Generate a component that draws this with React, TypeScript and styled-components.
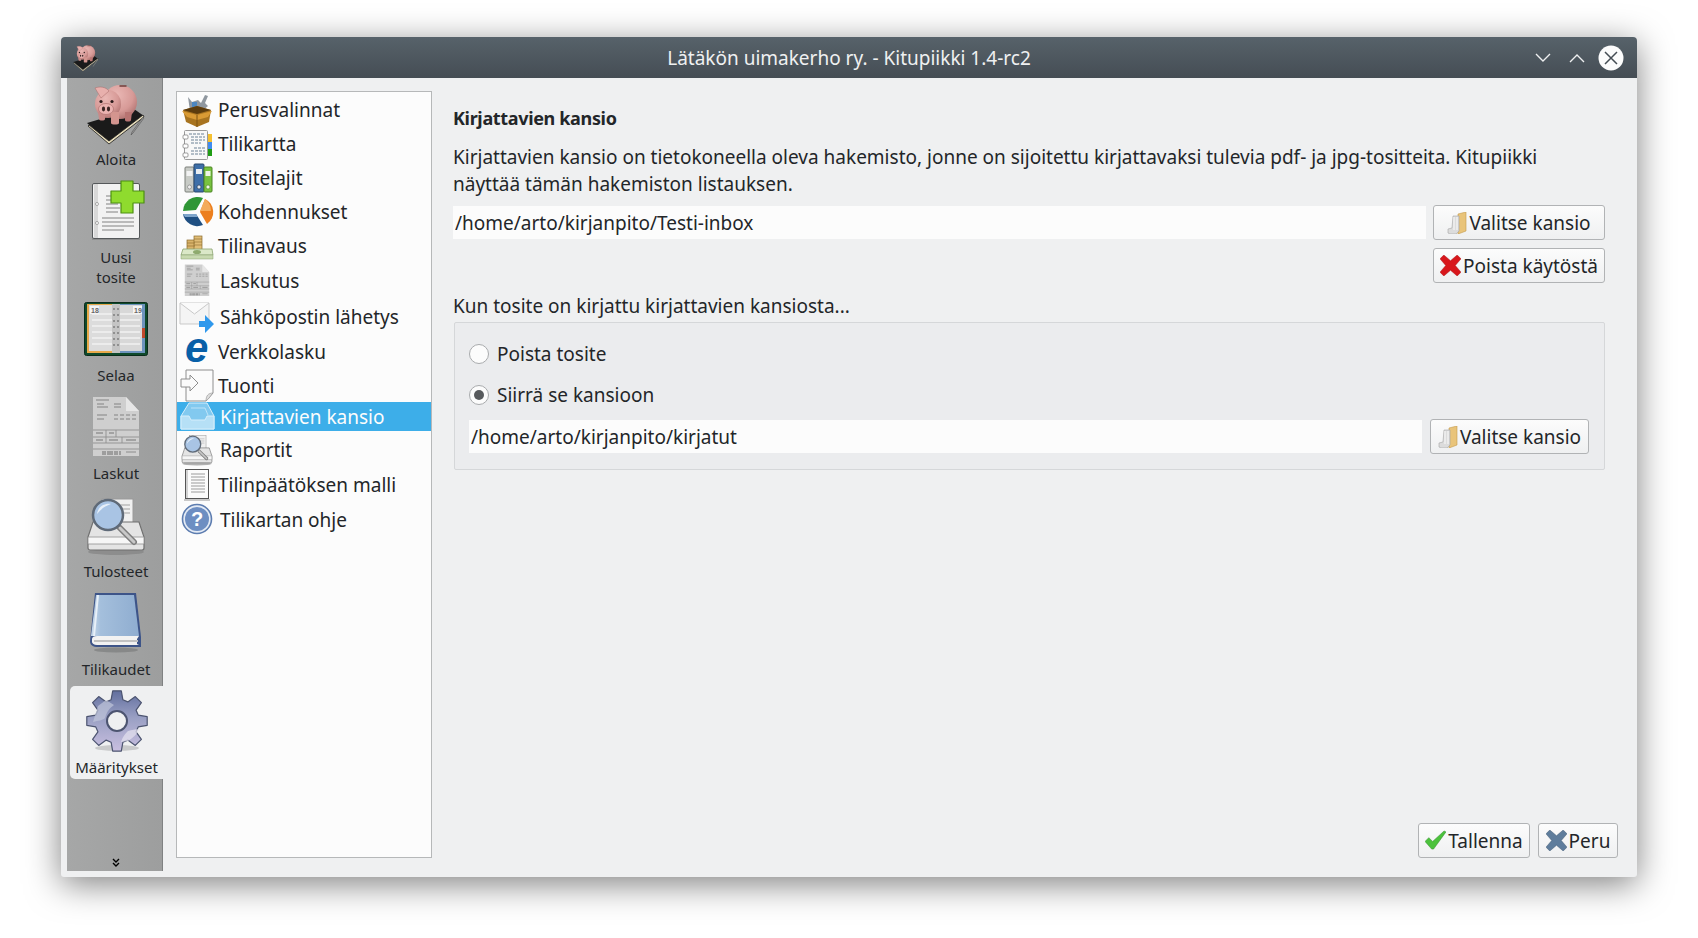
import React from "react";
import styled, { createGlobalStyle } from "styled-components";

const GlobalStyle = createGlobalStyle`
  html, body {
    margin: 0;
    height: 938px;
    overflow: hidden;
    background: #fff;
    font-family: "Noto Sans", "Open Sans", sans-serif;
    color: #232629;
  }
`;

const Screen = styled.div`
  padding: 37px 61px 61px;
  height: 938px;
  box-sizing: border-box;
`;

const Window = styled.div`
  height: 840px;
  display: flex;
  flex-direction: column;
  background: #eff0f1;
  border-radius: 4px 4px 3px 3px;
  box-shadow: 0 7px 34px rgba(0, 0, 0, 0.5);
`;

const TitleBar = styled.header`
  height: 41px;
  flex: none;
  display: grid;
  grid-template-columns: 1fr auto 1fr;
  align-items: center;
  background: linear-gradient(#57626a, #454d54);
  border-radius: 4px 4px 0 0;
  color: #eff0f1;
  font-size: 19px;
`;

const TitleIcon = styled.div`
  display: flex;
  padding-left: 11px;
`;

const TitleButtons = styled.div`
  display: flex;
  align-items: center;
  justify-content: flex-end;
  gap: 14px;
  padding-right: 13px;

  & > svg:last-child {
    margin-left: -3px;
  }
`;

const Body = styled.div`
  flex: 1;
  display: flex;
  min-height: 0;
`;

const Sidebar = styled.nav`
  width: 96px;
  margin: 0 0 6px 6px;
  position: relative;
  display: flex;
  flex-direction: column;
  gap: 5px;
  box-sizing: border-box;
  background: linear-gradient(90deg, #a6a7a7, #9d9e9e);
  border-right: 1px solid #7f8182;
`;

const SideItem = styled.div<{ $active?: boolean; $tall?: boolean }>`
  height: ${(p) => (p.$tall ? 113 : 93)}px;
  margin-left: 3px;
  margin-right: ${(p) => (p.$active ? -1 : 0)}px;
  padding-top: 4px;
  box-sizing: border-box;
  display: flex;
  flex-direction: column;
  align-items: center;
  border-radius: 5px 0 0 5px;
  background: ${(p) => (p.$active ? "#eff0f1" : "transparent")};
  font-size: 15px;
  line-height: 20px;
  text-align: center;
`;

const SideLabel = styled.div`
  margin-top: 3px;
`;

const MoreArrow = styled.div`
  position: absolute;
  left: 45px;
  bottom: 3px;
  display: flex;
`;

const ListPanel = styled.div`
  width: 256px;
  margin: 13px 0 19px 13px;
  padding-top: 1px;
  background: #fcfcfc;
  border: 1px solid #b6b8b9;
  box-sizing: border-box;
  flex: none;
`;

const ListRow = styled.div<{ $h: number; $selected?: boolean; $text: number }>`
  height: ${(p) => p.$h}px;
  display: flex;
  align-items: center;
  font-size: 19px;
  background: ${(p) => (p.$selected ? "#3daee9" : "transparent")};
  color: ${(p) => (p.$selected ? "#fcfcfc" : "#232629")};

  & > svg {
    margin-left: 3px;
    margin-right: ${(p) => p.$text - 3 - 34}px;
    flex: none;
  }
`;

const Main = styled.main`
  flex: 1;
  display: flex;
  flex-direction: column;
  min-width: 0;
`;

const Page = styled.section`
  flex: 1;
  padding: 27px 32px 0 21px;
  font-size: 19px;
  line-height: 27px;
`;

const Heading = styled.h2`
  margin: 0 0 13px;
  font-size: 18px;
  line-height: 26px;
  font-weight: 700;
  letter-spacing: -0.34px;
`;

const Paragraph = styled.p`
  margin: 0 0 7px;
`;

const Row = styled.div<{ $gap: number }>`
  display: flex;
  gap: ${(p) => p.$gap}px;
`;

const PathInput = styled.input`
  flex: 1;
  min-width: 0;
  margin: 1px 0;
  padding: 2px 2px 0;
  border: 0;
  outline: 0;
  background: #fcfcfc;
  font: inherit;
  color: #232629;
`;

const Button = styled.button<{ $w: number }>`
  width: ${(p) => p.$w}px;
  height: 35px;
  flex: none;
  display: flex;
  align-items: center;
  justify-content: center;
  gap: 2px;
  padding: 2px 0 0;
  border: 1px solid #b1b3b5;
  border-radius: 3px;
  background: linear-gradient(#fcfcfc, #eff0f1);
  font: inherit;
  font-size: 19px;
  color: #232629;

  & > svg {
    margin-top: -2px;
  }
`;

const FooterButton = styled(Button)`
  padding-top: 0;

  & > svg {
    margin-top: 0;
  }
`;

const RightAligned = styled.div`
  display: flex;
  justify-content: flex-end;
  margin-top: 8px;
`;

const GroupLabel = styled.div`
  margin: 10px 0 2px;
  height: 27px;
`;

const Group = styled.div`
  padding: 10px 15px 15px 14px;
  background: #ebecee;
  border: 1px solid #d5d7d9;
  border-radius: 2px;
  margin-left: 1px;
`;

const RadioRow = styled.label`
  height: 41px;
  box-sizing: border-box;
  padding-top: 2px;
  display: flex;
  align-items: center;
  gap: 8px;
`;

const Radio = styled.span<{ $checked?: boolean }>`
  width: 20px;
  height: 20px;
  margin-top: -2px;
  box-sizing: border-box;
  border: 1px solid #a9abad;
  border-radius: 50%;
  background: #fcfcfc;
  display: flex;
  align-items: center;
  justify-content: center;

  &::after {
    content: "";
    display: ${(p) => (p.$checked ? "block" : "none")};
    width: 10px;
    height: 10px;
    border-radius: 50%;
    background: #575a5d;
  }
`;

const GroupPathRow = styled(Row)`
  margin-top: 4px;
`;

const Footer = styled.footer`
  display: flex;
  justify-content: flex-end;
  gap: 8px;
  padding: 0 19px 19px 0;
`;

type IconProps = { size?: number };

const PigIcon = ({ size = 64 }: IconProps) => (
  <svg width={size} height={size} viewBox="0 0 64 64">
    <defs>
      <radialGradient id="pig" cx=".4" cy=".3" r=".8">
        <stop offset="0" stopColor="#eab8b5" />
        <stop offset=".6" stopColor="#d79a97" />
        <stop offset="1" stopColor="#a86a68" />
      </radialGradient>
    </defs>
    <path d="M3 41 50 27l10 7-35 27z" fill="#1a1a1a" />
    <path d="M5 43l20 16 34-26 1 2-35 27L4 44z" fill="#e6dcba" stroke="#1c1c1c" strokeWidth=".8" />
    <path d="M60 36 49 51l-2 2 1-3 11-15z" fill="#9a9a9a" stroke="#444" strokeWidth=".5" />
    <ellipse cx="36" cy="20" rx="17" ry="17" fill="url(#pig)" />
    <ellipse cx="24" cy="22" rx="13" ry="14" fill="url(#pig)" />
    <path d="M11 6c5-2 11-1 14 3l-8 7z" fill="#e8b0ad" stroke="#a86b69" strokeWidth=".5" />
    <path d="M36 4h6" stroke="#6e3f3d" strokeWidth="1.5" strokeLinecap="round" />
    <path d="M27 30h8v11c0 2-8 2-8 0z" fill="#d4958f" />
    <path d="M41 30h7l-1 8c0 2-6 2-6 0z" fill="#b87472" />
    <path d="M14 30h7v7c0 2-6 2-6 0z" fill="#c98a88" />
    <ellipse cx="22" cy="27" rx="7.5" ry="5.5" fill="#eab2b0" stroke="#a56765" strokeWidth=".6" />
    <ellipse cx="19.5" cy="27" rx="1.6" ry="2.4" fill="#3b2524" />
    <ellipse cx="24.5" cy="27" rx="1.6" ry="2.4" fill="#3b2524" />
    <circle cx="17" cy="19.5" r="1.6" fill="#2a1a1a" />
    <circle cx="28" cy="19.5" r="1.6" fill="#2a1a1a" />
  </svg>
);

const NewDocIcon = ({ size = 64 }: IconProps) => (
  <svg width={size} height={size} viewBox="0 0 64 64">
    <rect x="8" y="57" width="48" height="3" fill="#8d8e8e" />
    <rect x="8.5" y="3.5" width="47" height="55" rx="1.5" fill="#f2f2f2" stroke="#55585a" />
    <path d="M12 4v54" stroke="#d8d8d8" strokeWidth="4" />
    <circle cx="13" cy="24" r="1.5" fill="#fff" stroke="#777" strokeWidth=".6" />
    <circle cx="13" cy="43" r="1.5" fill="#fff" stroke="#777" strokeWidth=".6" />
    <path d="M22 16h12M22 20h12M22 24h12M22 28h14M22 32h12M18 38h32M18 42h32M18 46h32M18 50h22" stroke="#a8a8a8" strokeWidth="1.6" />
    <path d="M37 1h12v10h11v12H49v10H37V23H27V11h10z" fill="#8fdb2e" stroke="#4d8f12" strokeWidth="1.2" strokeLinejoin="round" />
  </svg>
);

const CalendarIcon = ({ size = 64 }: IconProps) => (
  <svg width={size} height={size} viewBox="0 0 64 64">
    <rect x="0.5" y="4.5" width="63" height="53" rx="2" fill="#0f4a2c" stroke="#0a2c1a" />
    <rect x="3" y="6" width="58" height="49" fill="#e8a94a" />
    <rect x="33" y="6" width="28" height="49" fill="#6d93bd" />
    <rect x="58" y="30" width="3" height="10" fill="#c0492b" />
    <rect x="5" y="7" width="27" height="46" fill="#dcdcdc" />
    <rect x="32" y="7" width="26" height="46" fill="#d8d8d8" />
    <path d="M8 16h20M8 22h20M8 28h20M8 34h20M8 40h20M8 46h20M36 16h20M36 22h20M36 28h20M36 34h20M36 40h20M36 46h20" stroke="#f1f1f1" strokeWidth="1.5" />
    <path d="M28 6h8v49h-8z" fill="#c4c4c4" />
    <path d="M30 10v42M34 10v42" stroke="#7f7f7f" strokeWidth="1.5" strokeDasharray="2 4" />
    <rect x="6" y="8" width="9" height="8" fill="#f4f4f4" />
    <rect x="49" y="8" width="9" height="8" fill="#f4f4f4" />
    <text x="7" y="15" fontSize="7" fontWeight="700" fill="#666" fontFamily="Liberation Sans">18</text>
    <text x="50" y="15" fontSize="7" fontWeight="700" fill="#666" fontFamily="Liberation Sans">19</text>
  </svg>
);

const InvoiceIcon = ({ size = 64 }: IconProps) => (
  <svg width={size} height={size} viewBox="0 0 64 64">
    <path d="M9 1h33l13 14v45H9z" fill="#cfcfcf" />
    <path d="M42 1v14h13z" fill="#e6e6e6" />
    <path d="M12 4h13M13 8h7M13 11h11M30 8h7M30 11h7M13 19h10M13 23h7M30 19h4M36 19h4M42 19h4M48 19h4M30 23h4M36 23h4M42 23h4M48 23h4" stroke="#848484" strokeWidth="1.1" fill="none" />
    <path d="M9 34h46M9 41h46M9 47h46M22 34v13M32 34v7M38 41v6M9 53h46" stroke="#8e8e8e" strokeWidth=".9" fill="none" />
    <path d="M12 37h7M25 37h5M12 44h7M25 44h9M42 44h10" stroke="#777" strokeWidth="1.1" />
    <path d="M19 55v4M21 55v4M24 55v4M26 55v4M28 55v4M31 55v4M33 55v4M36 55v4" stroke="#6c6c6c" strokeWidth="1" />
    <path d="M42 56h10" stroke="#8c8c8c" strokeWidth="1" />
  </svg>
);

const PrinterIcon = ({ size = 64 }: IconProps) => (
  <svg width={size} height={size} viewBox="0 0 64 64">
    <ellipse cx="32" cy="58" rx="28" ry="3" fill="#7f7f7f" opacity=".6" />
    <rect x="18" y="5" width="31" height="32" fill="#f0f0f0" stroke="#9a9a9a" />
    <path d="M36 11h10M38 15h8M38 19h8" stroke="#bcbcbc" strokeWidth="1.4" />
    <path d="M4 43l5-15h46l5 15v11a2 2 0 0 1-2 2H6a2 2 0 0 1-2-2z" fill="#e4e4e4" stroke="#6f6f6f" strokeWidth="1.2" />
    <path d="M4 43h56v7H4z" fill="#f6f6f6" stroke="#8f8f8f" strokeWidth=".8" />
    <path d="M36 34l14 14" stroke="#7d7d7d" strokeWidth="6" strokeLinecap="round" />
    <path d="M36 34l14 14" stroke="#c8c8c8" strokeWidth="3" strokeLinecap="round" />
    <circle cx="24" cy="21" r="15" fill="#a9c4e4" stroke="#5f6a78" strokeWidth="2.5" />
    <path d="M13 20c1-7 7-11 14-10-6 2-10 5-14 10z" fill="#e6eff9" />
  </svg>
);

const BookIcon = ({ size = 64 }: IconProps) => (
  <svg width={size} height={size} viewBox="0 0 64 64">
    <defs>
      <linearGradient id="bookBody" x1="0" y1="0" x2="1" y2="0">
        <stop offset="0" stopColor="#c8d9ea" />
        <stop offset=".2" stopColor="#a4bfdc" />
        <stop offset="1" stopColor="#8fadd0" />
      </linearGradient>
    </defs>
    <ellipse cx="32" cy="58" rx="22" ry="2.5" fill="#7c7d7d" opacity=".7" />
    <path d="M11 1h41l5 44v10H14c-5 0-8-2-8-6z" fill="#3d5488" />
    <path d="M12 3h38l5 41H7z" fill="url(#bookBody)" />
    <path d="M8 47c0-2 2-3 5-3h42l-2 3v5l2 1H13c-3 0-5-2-5-3z" fill="#f2f2f2" />
    <path d="M10 49h44" stroke="#c2c2c2" strokeWidth="2" />
    <path d="M14 3 10 44" stroke="#e8f0f8" strokeWidth="2" />
  </svg>
);

// 8 teeth, worked out once instead of writing the points by hand
const gearPath = (() => {
  const pts: string[] = [];
  for (let i = 0; i < 8; i++) {
    const a = (i * Math.PI) / 4 - Math.PI / 2;
    const p = (r: number, d: number) =>
      `${(32 + r * Math.cos(a + d)).toFixed(1)} ${(31 + r * Math.sin(a + d)).toFixed(1)}`;
    pts.push(p(22, -0.27), p(30.5, -0.14), p(30.5, 0.14), p(22, 0.27));
  }
  return `M${pts.join("L")}z`;
})();

const GearIcon = ({ size = 64 }: IconProps) => (
  <svg width={size} height={size} viewBox="0 0 64 64">
    <defs>
      <linearGradient id="gear" x1="0" y1="0" x2="0" y2="1">
        <stop offset="0" stopColor="#626f9e" />
        <stop offset=".45" stopColor="#9aa0c4" />
        <stop offset="1" stopColor="#c9bfe0" />
      </linearGradient>
    </defs>
    <ellipse cx="32" cy="58" rx="22" ry="3" fill="#c9cacb" />
    <path d={gearPath} fill="url(#gear)" stroke="#4c5470" strokeWidth="1.2" strokeLinejoin="round" />
    <path d="M8 32c6-2 9-1 12-4 2-7 5-10 9-13l-8-5-8 6z" fill="#c0c6da" opacity=".7" />
    <path d="M36 52c2-6 5-9 7-11 4-1 7-2 12-2-3 5-7 9-12 12z" fill="#e6e2f0" opacity=".7" />
    <circle cx="32" cy="31" r="10" fill="#eff0f1" stroke="#4c5470" strokeWidth="2" />
  </svg>
);

const SmallIcon = ({ children }: { children: React.ReactNode }) => (
  <svg width="34" height="34" viewBox="0 0 34 34" overflow="visible">
    {children}
  </svg>
);

const BoxIcon = () => (
  <SmallIcon>
    <path d="M8 4l4 5 6-2 3 3 4-8 3 1-3 7 3 3-6 5H10z" fill="#8f979f" />
    <path d="M12 9h5v6h-5z" fill="#4c86c0" />
    <path d="M3 17 17 13l14 4-2 12-12 5-11-5z" fill="#a87420" />
    <path d="M3 17l14 4 14-4-14-4z" fill="#5c3c0e" />
    <path d="M2 18l15 4 15-4-4 6-11 3-10-3z" fill="#d99a34" />
    <path d="M17 22v12" stroke="#7d5312" />
  </SmallIcon>
);

const ChartIcon = () => (
  <SmallIcon>
    <rect x="27" y="7" width="5" height="8" fill="#f5c030" />
    <rect x="27" y="15" width="5" height="7" fill="#3f8cf0" />
    <rect x="27" y="22" width="5" height="7" fill="#1f9c14" />
    <rect x="4.5" y="3.5" width="23" height="29" rx="1" fill="#f8f8f8" stroke="#9a9a9a" />
    <path d="M9 7h16M11 10h14M11 13h14M11 16h10M14 21h11M11 24h14M11 27h14" stroke="#6c8296" strokeWidth="1" strokeDasharray="3 1" />
    <rect x="3" y="8" width="5" height="4" rx="1" fill="#fff" stroke="#777" strokeWidth=".7" />
    <rect x="3" y="17" width="5" height="4" rx="1" fill="#fff" stroke="#777" strokeWidth=".7" />
    <rect x="3" y="26" width="5" height="4" rx="1" fill="#fff" stroke="#777" strokeWidth=".7" />
  </SmallIcon>
);

const BindersIcon = () => (
  <SmallIcon>
    <rect x="5" y="6" width="9" height="25" rx="1" fill="#c8cbc6" stroke="#7c807a" />
    <rect x="14" y="3" width="10" height="28" rx="1" fill="#3e6fa8" stroke="#28496f" />
    <rect x="24" y="6" width="8" height="25" rx="1" fill="#78c240" stroke="#4a8422" />
    <rect x="6.5" y="10" width="6" height="5" fill="#f2f2f2" />
    <rect x="16" y="8" width="6" height="5" fill="#e8edf2" />
    <rect x="25.5" y="10" width="5" height="5" fill="#eef5e6" />
    <circle cx="9.5" cy="26" r="2" fill="#f0f0f0" stroke="#777" strokeWidth=".6" />
    <circle cx="19" cy="26" r="2" fill="#dde6f0" stroke="#234" strokeWidth=".6" />
    <circle cx="28" cy="26" r="2" fill="#f0f7e8" stroke="#4a8422" strokeWidth=".6" />
  </SmallIcon>
);

const PieIcon = () => (
  <SmallIcon>
    <path d="M3 16A14.5 14.5 0 0 1 23 3l-7 12z" fill="#2f9636" />
    <path d="M25 4A14.5 14.5 0 0 1 27 29l-7-12z" fill="#ec7f1e" />
    <path d="M25 4A14.5 14.5 0 0 1 31 16H20z" fill="#f4ab5a" />
    <path d="M3 19H16l7 11A14.5 14.5 0 0 1 3 19z" fill="#1f4f82" />
    <path d="M3 19h13l2 3H5z" fill="#7fa5cb" />
  </SmallIcon>
);

const MoneyIcon = () => (
  <SmallIcon>
    <rect x="7" y="11" width="8" height="10" fill="#d9b36a" stroke="#8b6a2c" strokeWidth=".7" />
    <rect x="14" y="7" width="8" height="14" fill="#e0bd77" stroke="#8b6a2c" strokeWidth=".7" />
    <path d="M7 14h8M7 17h8M14 10h8M14 13h8M14 16h8" stroke="#8b6a2c" strokeWidth=".6" />
    <path d="M3 20h29l1 6H1z" fill="#dbe8c8" stroke="#8aa270" strokeWidth=".8" />
    <path d="M1 26h32v4H1z" fill="#c8d9b0" stroke="#8aa270" strokeWidth=".5" />
    <ellipse cx="17" cy="23" rx="4" ry="2" fill="#8eaa6e" />
  </SmallIcon>
);

const MailIcon = () => (
  <SmallIcon>
    <path d="M0 3h29v21H0z" fill="#f4f4f4" stroke="#c9c9c9" />
    <path d="M0 3l14.5 11L29 3" fill="#fafafa" stroke="#c9c9c9" />
    <path d="M19 21h6v-6l9 9-9 9v-6h-6z" fill="#2f98ec" />
  </SmallIcon>
);

const EInvoiceIcon = () => (
  <SmallIcon>
    <text x="5" y="27" fontSize="42" fontWeight="700" fontStyle="italic" fill="#0860a8" fontFamily="Liberation Sans">
      e
    </text>
  </SmallIcon>
);

const ImportIcon = () => (
  <SmallIcon>
    <path d="M6 1h27v23l-7 8H6z" fill="#fbfbfb" stroke="#8e8e8e" />
    <path d="M26 32c0-5 2-8 7-8-3 3-3 5-7 8z" fill="#dedede" stroke="#8e8e8e" strokeWidth=".6" />
    <path d="M1 10h9V6l8 8-8 8v-4H1z" fill="#fbfbfb" stroke="#8e8e8e" />
  </SmallIcon>
);

const TrayIcon = () => (
  <SmallIcon>
    <path d="M9 3h18l7 13v13H1V16z" fill="#82c9ef" stroke="#d6eefb" />
    <path d="M1 16h8l2 4h14l2-4h7v13H1z" fill="#b6e0f6" stroke="#d6eefb" />
    <path d="M11 8h14l3 7" fill="none" stroke="#cdeafa" strokeWidth=".8" />
  </SmallIcon>
);

const PageLinesIcon = () => (
  <SmallIcon>
    <rect x="4" y="31" width="26" height="2" fill="#c9c9c9" />
    <rect x="5.5" y="1.5" width="23" height="29" fill="#fbfbfb" stroke="#555" />
    <path d="M7 2v28" stroke="#d3d3d3" strokeWidth="2" />
    <path d="M11 6h14M11 9h14M11 12h14M11 15h14M11 18h14M11 21h14M11 24h14" stroke="#9b9b9b" />
  </SmallIcon>
);

const HelpIcon = () => (
  <SmallIcon>
    <circle cx="17" cy="16" r="14.5" fill="#e4ebf5" stroke="#5d7db0" strokeWidth="1.6" />
    <circle cx="17" cy="16" r="12" fill="#6d8ec2" />
    <text x="17" y="23" textAnchor="middle" fontSize="20" fontWeight="700" fill="#fff" fontFamily="Liberation Sans">
      ?
    </text>
  </SmallIcon>
);

const FolderIcon = () => (
  <svg width="20" height="22" viewBox="0 0 20 22">
    <path d="M11 2 19 0v19l-8 3z" fill="#e9c47a" stroke="#c49a4e" strokeWidth=".6" />
    <path d="M1 21v-4l4-1 1-12h6v15l-3 3H3z" fill="#dcdcdc" stroke="#a5a5a5" strokeWidth=".6" />
    <path d="M7 5v13M10 5v13" stroke="#f5f5f5" strokeWidth="1.2" />
  </svg>
);

const RedCrossIcon = () => (
  <svg width="21" height="21" viewBox="0 0 22 22">
    <path d="M4 0l7 6 7-6 4 4-6 7 6 7-4 4-7-6-7 6-4-4 6-7-6-7z" fill="#d8171c" stroke="#a81014" strokeWidth=".5" />
  </svg>
);

const CheckIcon = () => (
  <svg width="21" height="21" viewBox="0 0 22 22">
    <path d="M0 12l4-4 4 4L20 1l2 1L9 20H7z" fill="#4cc23c" stroke="#2f8a28" strokeWidth=".5" />
  </svg>
);

const CancelIcon = () => (
  <svg width="21" height="21" viewBox="0 0 22 22">
    <path d="M4 0l7 6 7-6 4 4-6 7 6 7-4 4-7-6-7 6-4-4 6-7-6-7z" fill="#5f7d9c" stroke="#3c556e" strokeWidth=".5" />
  </svg>
);

const WinChevron = ({ up }: { up?: boolean }) => (
  <svg width="20" height="12" viewBox="0 0 20 12">
    <path d={up ? "M3 10l7-7 7 7" : "M3 2l7 7 7-7"} fill="none" stroke="#eff0f1" strokeWidth="1.4" />
  </svg>
);

const CloseIcon = () => (
  <svg width="26" height="26" viewBox="0 0 26 26">
    <circle cx="13" cy="13" r="12.5" fill="#fcfcfc" />
    <path d="M7 7l12 12M19 7 7 19" stroke="#454d54" strokeWidth="1.5" />
  </svg>
);

const sideItems = [
  { label: "Aloita", icon: <PigIcon /> },
  { label: "Uusi tosite", icon: <NewDocIcon />, tall: true },
  { label: "Selaa", icon: <CalendarIcon /> },
  { label: "Laskut", icon: <InvoiceIcon /> },
  { label: "Tulosteet", icon: <PrinterIcon /> },
  { label: "Tilikaudet", icon: <BookIcon /> },
  { label: "Määritykset", icon: <GearIcon />, active: true },
];

const listItems = [
  { label: "Perusvalinnat", h: 34, text: 41, icon: <BoxIcon /> },
  { label: "Tilikartta", h: 34, text: 41, icon: <ChartIcon /> },
  { label: "Tositelajit", h: 34, text: 41, icon: <BindersIcon /> },
  { label: "Kohdennukset", h: 34, text: 41, icon: <PieIcon /> },
  { label: "Tilinavaus", h: 34, text: 41, icon: <MoneyIcon /> },
  { label: "Laskutus", h: 36, text: 43, icon: <InvoiceIcon size={34} /> },
  { label: "Sähköpostin lähetys", h: 36, text: 43, icon: <MailIcon /> },
  { label: "Verkkolasku", h: 34, text: 41, icon: <EInvoiceIcon /> },
  { label: "Tuonti", h: 33, text: 41, icon: <ImportIcon /> },
  { label: "Kirjattavien kansio", h: 29, text: 43, icon: <TrayIcon />, selected: true },
  { label: "Raportit", h: 37, text: 43, icon: <PrinterIcon size={34} /> },
  { label: "Tilinpäätöksen malli", h: 33, text: 41, icon: <PageLinesIcon /> },
  { label: "Tilikartan ohje", h: 38, text: 43, icon: <HelpIcon /> },
];

export default function App() {
  return (
    <>
      <GlobalStyle />
      <Screen>
        <Window>
          <TitleBar>
            <TitleIcon>
              <PigIcon size={28} />
            </TitleIcon>
            <div>Lätäkön uimakerho ry. - Kitupiikki 1.4-rc2</div>
            <TitleButtons>
              <WinChevron />
              <WinChevron up />
              <CloseIcon />
            </TitleButtons>
          </TitleBar>
          <Body>
            <Sidebar>
              {sideItems.map((item) => (
                <SideItem key={item.label} $active={item.active} $tall={item.tall}>
                  {item.icon}
                  <SideLabel>{item.label === "Uusi tosite" ? <>Uusi<br />tosite</> : item.label}</SideLabel>
                </SideItem>
              ))}
              <MoreArrow>
                <svg width="8" height="10" viewBox="0 0 8 10">
                  <path d="M1 1l3 3 3-3M1 5l3 3 3-3" fill="none" stroke="#000" strokeWidth="1.4" />
                </svg>
              </MoreArrow>
            </Sidebar>
            <ListPanel>
              {listItems.map((item) => (
                <ListRow key={item.label} $h={item.h} $text={item.text} $selected={item.selected}>
                  {item.icon}
                  {item.label}
                </ListRow>
              ))}
            </ListPanel>
            <Main>
              <Page>
                <Heading>Kirjattavien kansio</Heading>
                <Paragraph>
                  Kirjattavien kansio on tietokoneella oleva hakemisto, jonne on sijoitettu kirjattavaksi tulevia pdf- ja
                  jpg-tositteita. Kitupiikki näyttää tämän hakemiston listauksen.
                </Paragraph>
                <Row $gap={7}>
                  <PathInput readOnly value="/home/arto/kirjanpito/Testi-inbox" />
                  <Button $w={172}>
                    <FolderIcon />
                    Valitse kansio
                  </Button>
                </Row>
                <RightAligned>
                  <Button $w={172}>
                    <RedCrossIcon />
                    Poista käytöstä
                  </Button>
                </RightAligned>
                <GroupLabel>Kun tosite on kirjattu kirjattavien kansiosta...</GroupLabel>
                <Group>
                  <RadioRow>
                    <Radio />
                    Poista tosite
                  </RadioRow>
                  <RadioRow>
                    <Radio $checked />
                    Siirrä se kansioon
                  </RadioRow>
                  <GroupPathRow $gap={8}>
                    <PathInput readOnly value="/home/arto/kirjanpito/kirjatut" />
                    <Button $w={159}>
                      <FolderIcon />
                      Valitse kansio
                    </Button>
                  </GroupPathRow>
                </Group>
              </Page>
              <Footer>
                <FooterButton $w={112}>
                  <CheckIcon />
                  Tallenna
                </FooterButton>
                <FooterButton $w={80}>
                  <CancelIcon />
                  Peru
                </FooterButton>
              </Footer>
            </Main>
          </Body>
        </Window>
      </Screen>
    </>
  );
}
